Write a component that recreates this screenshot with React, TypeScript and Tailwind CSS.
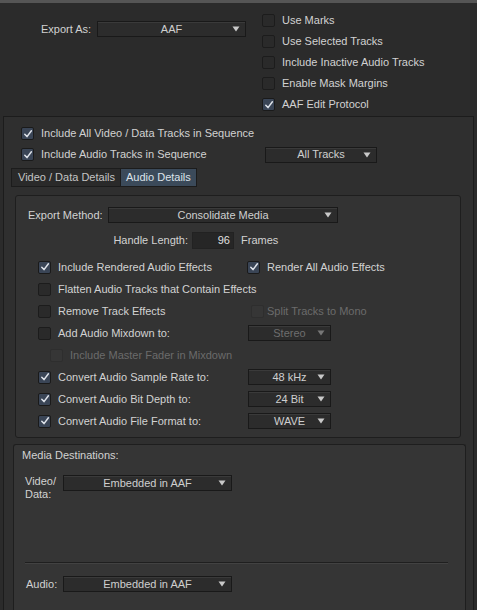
import React from "react";

const Check = ({ checked = false, disabled = false }: { checked?: boolean; disabled?: boolean }) => (
  <div
    className={
      "w-[13px] h-[13px] rounded-[2px] border flex items-center justify-center shrink-0 " +
      (disabled
        ? "border-[#2e2e2e] bg-[#363636]"
        : checked
        ? "border-[#1a1a1a] bg-[#3a4556]"
        : "border-[#1c1c1c] bg-[#2a2a2a]")
    }
  >
    {checked && (
      <svg width="10" height="10" viewBox="0 0 10 10">
        <path d="M1.8 5.2 L4 7.6 L8.4 1.8" fill="none" stroke="#dfe3ea" strokeWidth="1.5" strokeLinecap="round" strokeLinejoin="round" />
      </svg>
    )}
  </div>
);

const CheckRow = ({
  label,
  checked = false,
  disabled = false,
  h = "h-[22px]",
}: {
  label: string;
  checked?: boolean;
  disabled?: boolean;
  h?: string;
}) => (
  <div className={"flex items-center gap-[7px] whitespace-nowrap " + h}>
    <Check checked={checked} disabled={disabled} />
    <span className={disabled ? "text-[#6b6b6b]" : "text-[#d2d2d2]"}>{label}</span>
  </div>
);

const Drop = ({ label, w, disabled = false }: { label: string; w: string; disabled?: boolean }) => (
  <div
    className={
      "relative h-[16px] border border-[#191919] bg-[#2c2c2c] shadow-[inset_0_1px_0_#3a3a3a] flex items-center justify-center shrink-0 whitespace-nowrap " +
      w
    }
  >
    <span className={disabled ? "text-[#6e6e6e]" : "text-[#cfcfcf]"}>{label}</span>
    <svg className="absolute right-[5px] top-[4px]" width="8" height="6" viewBox="0 0 8 6">
      <path d="M0.5 0.5 L7.5 0.5 L4 5.5 Z" fill={disabled ? "#777" : "#c9c9c9"} />
    </svg>
  </div>
);

export default function App() {
  return (
    <div
      className="w-[477px] h-[610px] overflow-hidden bg-[#2b2b2b] text-[11px] leading-[13px] text-[#d2d2d2] flex flex-col"
      style={{ fontFamily: '"Liberation Sans", Arial, sans-serif' }}
    >
      <div className="h-[3px] bg-[#555555] shrink-0" />
      {/* top section */}
      <div className="h-[113px] flex shrink-0">
        <div className="w-[262px] pl-[41px] pt-[18px] flex items-start">
          <div className="h-[16px] flex items-center w-[56px]">Export As:</div>
          <Drop label="AAF" w="w-[149px]" />
        </div>
        <div className="pt-[7px] flex flex-col">
          <CheckRow label="Use Marks" h="h-[21px]" />
          <CheckRow label="Use Selected Tracks" h="h-[21px]" />
          <CheckRow label="Include Inactive Audio Tracks" h="h-[21px]" />
          <CheckRow label="Enable Mask Margins" h="h-[21px]" />
          <CheckRow label="AAF Edit Protocol" checked h="h-[21px]" />
        </div>
      </div>
      {/* lower panel */}
      <div className="flex-1 ml-[3px] w-[471px] border-t border-l border-r border-[#1c1c1c] bg-[#2f2f2f] flex flex-col">
        <div className="pl-[17px] pt-[6px] flex flex-col">
          <CheckRow label="Include All Video / Data Tracks in Sequence" checked h="h-[21px]" />
          <div className="flex items-center h-[21px]">
            <div className="w-[244px]">
              <CheckRow label="Include Audio Tracks in Sequence" checked h="h-[21px]" />
            </div>
            <Drop label="All Tracks" w="w-[112px]" />
          </div>
        </div>
        {/* tabs */}
        <div className="ml-[7px] mt-[3px] flex h-[19px] whitespace-nowrap">
          <div className="px-[6px] flex items-center border border-[#1c1c1c] bg-[#2a2a2a] text-[#c4c4c4] w-[110px]">
            Video / Data Details
          </div>
          <div className="px-[5px] flex items-center border border-[#1c1c1c] border-l-0 bg-[#3b4a5a] text-[#dde3ea] w-[76px]">
            Audio Details
          </div>
        </div>
        {/* audio details box */}
        <div className="ml-[11px] mt-[8px] w-[446px] h-[243px] border border-[#1e1e1e] rounded-[3px] bg-[#333333] flex flex-col pl-[12px] pt-[11px] shrink-0">
          <div className="flex items-center h-[16px]">
            <div className="w-[80px]">Export Method:</div>
            <Drop label="Consolidate Media" w="w-[230px]" />
          </div>
          <div className="flex items-center h-[17px] mt-[9px]">
            <div className="w-[164px] text-right pr-[4px]">Handle Length:</div>
            <div className="w-[42px] h-[17px] bg-[#262626] border border-[#222] flex items-center justify-end pr-[3px] text-[#e0e0e0]">
              96
            </div>
            <div className="ml-[7px]">Frames</div>
          </div>
          <div className="pl-[10px] mt-[7px] flex flex-col">
            <div className="flex items-center h-[22px]">
              <div className="w-[209px]">
                <CheckRow label="Include Rendered Audio Effects" checked />
              </div>
              <CheckRow label="Render All Audio Effects" checked />
            </div>
            <CheckRow label="Flatten Audio Tracks that Contain Effects" />
            <div className="flex items-center h-[22px]">
              <div className="w-[213px]">
                <CheckRow label="Remove Track Effects" />
              </div>
              <div className="flex items-center gap-[3px] whitespace-nowrap">
                <Check disabled />
                <span className="text-[#6b6b6b]">Split Tracks to Mono</span>
              </div>
            </div>
            <div className="flex items-center h-[22px]">
              <div className="w-[210px]">
                <CheckRow label="Add Audio Mixdown to:" />
              </div>
              <Drop label="Stereo" w="w-[83px]" disabled />
            </div>
            <div className="pl-[12px]">
              <CheckRow label="Include Master Fader in Mixdown" disabled />
            </div>
            <div className="flex items-center h-[22px]">
              <div className="w-[210px]">
                <CheckRow label="Convert Audio Sample Rate to:" checked />
              </div>
              <Drop label="48 kHz" w="w-[83px]" />
            </div>
            <div className="flex items-center h-[22px]">
              <div className="w-[210px]">
                <CheckRow label="Convert Audio Bit Depth to:" checked />
              </div>
              <Drop label="24 Bit" w="w-[83px]" />
            </div>
            <div className="flex items-center h-[22px]">
              <div className="w-[210px]">
                <CheckRow label="Convert Audio File Format to:" checked />
              </div>
              <Drop label="WAVE" w="w-[83px]" />
            </div>
          </div>
        </div>
        {/* media destinations */}
        <div className="ml-[9px] mt-[6px] w-[453px] flex-1 border-t border-l border-r border-[#1e1e1e] rounded-t-[3px] bg-[#353535] flex flex-col pt-[3px]">
          <div className="pl-[8px] h-[14px] flex items-center">Media Destinations:</div>
          <div className="flex mt-[13px] pl-[11px]">
            <div className="w-[38px] leading-[13px]">
              Video/
              <br />
              Data:
            </div>
            <Drop label="Embedded in AAF" w="w-[169px]" />
          </div>
          <div className="ml-[11px] mt-[61px] w-[423px] h-[2px] border-t border-[#1f1f1f] border-b border-b-[#424242]" />
          <div className="flex items-center mt-[12px] pl-[12px]">
            <div className="w-[37px]">Audio:</div>
            <Drop label="Embedded in AAF" w="w-[169px]" />
          </div>
        </div>
      </div>
    </div>
  );
}
